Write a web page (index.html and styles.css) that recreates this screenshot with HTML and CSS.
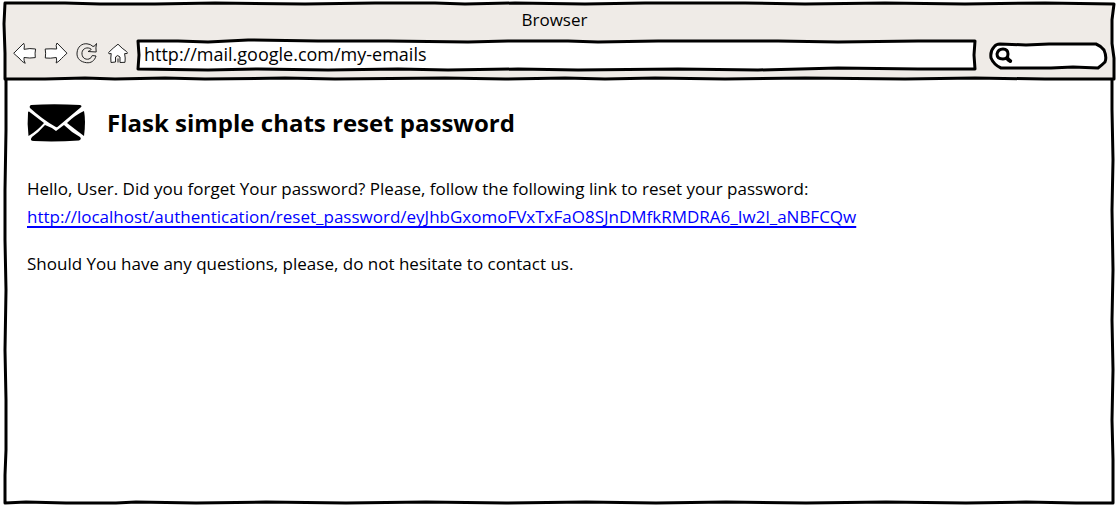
FILE: index.html
```html
<!DOCTYPE html>
<html lang="en">
<head>
<meta charset="utf-8">
<title>Browser</title>
<link rel="stylesheet" href="styles.css">
</head>
<body>
<div class="window">
  <header class="chrome">
    <svg class="outline" viewBox="0 0 1109 77" preserveAspectRatio="none" aria-hidden="true">
      <path class="chrome-fill" d="M0 -1L60 -1L95 0L150 0L210 -1L300 0L370 -1L430 -1L460 0L510 -1L580 0L640 -1L740 -1L800 0L880 -1L960 0L1040 -1L1109 0L1107 16L1107 40L1109 55L1109 76L1040 76L970 75L900 76L800 75L720 76L650 75L600 76L560 75L500 76L440 75L330 76L280 75L200 76L160 75L110 76L80 75L40 76L0 76L0 50L-1 20Z"/>
    </svg>
    <div class="title">Browser</div>
    <div class="toolbar">
      <nav class="nav" aria-label="Navigation">
        <button class="tool" type="button" aria-label="Back"><svg viewBox="0 0 24 24"><path d="M.7 12.3L10.7 2.3Q12 4 11 8.3Q17 7 22.6 8Q21.7 12 22.3 16.6Q17 17.500 11 16.500Q10.500 19 12.200 22.300Q9 21 6 17Q3 14.500 .7 12.300Z"/></svg></button>
        <button class="tool" type="button" aria-label="Forward"><svg viewBox="0 0 24 24"><path d="M23 12.200L13 2Q11.500 4 12.700 8Q7 7.600 1.200 8Q2 12 1.300 17Q6 17.600 12.300 16.500Q13 19 12.200 22Q15 20.500 17.500 17.500Q19 16 23 12.200Z"/></svg></button>
        <button class="tool" type="button" aria-label="Reload"><svg viewBox="0 0 24 24"><path d="M18 5.500Q20 5.500 21.500 2.500Q20.500 7 21.200 11L13 10.500Q15.500 10 16.200 8.200C12.500 5.400 7.500 7.500 7 11.500C6.500 16.500 10 19 14 18Q16.500 17 17.300 14.500L21 15C19.500 20 16 22.200 11.500 21.700C5.500 21 1.600 17.500 2 12C2.500 5.500 7 2.300 12 2.800Q15.500 3 18 5.500Z"/></svg></button>
        <button class="tool" type="button" aria-label="Home"><svg viewBox="0 0 24 24"><path d="M12 3.200Q7 7 2.600 11.500L3 12.800L5.200 12.500Q4.500 17 5 21.500L9.500 21V16Q11.500 13 14 16V21.500L19 21.300Q19.600 17 18.600 12.600L21.200 12.500Q21.700 11.500 20.500 10.500Q16 7.500 12 3.200Z"/><path d="M12 21.500V17.500"/></svg></button>
      </nav>
      <label class="field address">
        <svg class="outline" viewBox="0 0 837 28" preserveAspectRatio="none" aria-hidden="true"><path d="M0 0L40 0L70 1L110 -1L180 0L250 0L330 1L370 0L430 0L460 1L520 0L640 0L700 1L780 0L837 0L836 14L837 28L780 28L700 27L620 29L540 28L440 29L380 28L310 29L260 28L190 29L120 28L70 29L0 28L1 14Z"/></svg>
        <input class="input" type="text" aria-label="Address" value="http://mail.google.com/my-emails">
      </label>
      <label class="field search">
        <svg class="outline" viewBox="0 0 115 24" preserveAspectRatio="none" aria-hidden="true"><path d="M9 0L35 1L58 0L105 0Q110 2 113 6Q116 13 114 18Q111 21 107 24L82 23L60 24H10Q3 21 0 14Q-1 7 3 3Q5 0 9 0Z"/></svg>
        <svg class="lens" viewBox="0 0 18 18" aria-hidden="true"><path d="M8 2Q13 2 13 7Q13 12 8 12Q2 12 2 7Q3 2 8 2Z"/><path class="handle" d="M12.200 11Q13 13 15.200 14"/></svg>
        <input class="input" type="search" aria-label="Search">
      </label>
    </div>
  </header>
  <main class="content">
    <svg class="outline" viewBox="0 0 1107 423" preserveAspectRatio="none" aria-hidden="true"><path d="M0 0L0 50L-1 110L-1 160L0 210L-1 270L0 320L0 370L-1 395L-1 423L20 422L60 423L110 423L130 422L190 423L260 422L340 423L420 422L500 423L580 422L650 423L720 422L800 423L880 422L960 423L1020 422L1070 423L1107 423L1107 380L1106 340L1107 290L1106 240L1107 190L1106 130L1107 80L1106 30L1106 0"/></svg>
    <div class="heading">
      <svg class="envelope" viewBox="0 0 60 38" aria-hidden="true"><path d="M4 1Q26-.5 53 1Q56 2 53 4L31 22.500Q30 24 28 22.500Q15 15 3 4Q2 2 4 1Z"/><path d="M2 7.500L17 19Q10 27 1.500 32Q0 20 1 9Q1 7 2 7.500Z"/><path d="M57 7Q59 17 57 32Q49 26 40 19Q48 11 57 7Z"/><path d="M18 21Q24 23 29 27L37 21Q44 28 53 33Q55 35 52 36.500Q28 38 7 37Q2 37 5 33Q12 28 18 21Z"/></svg>
      <h1 class="subject">Flask simple chats reset password</h1>
    </div>
    <p class="text">Hello, User. Did you forget Your password? Please, follow the following link to reset your password:<br>
    <a class="link" href="#reset">http://localhost/authentication/reset_password/eyJhbGxomoFVxTxFaO8SJnDMfkRMDRA6_Iw2l_aNBFCQw</a></p>
    <p class="text">Should You have any questions, please, do not hesitate to contact us.</p>
  </main>
</div>
</body>
</html>
```
FILE: styles.css
```css
* {
  box-sizing: border-box;
}

body {
  margin: 0;
  background: #fff;
  color: #000;
  font: 17px/28px "Open Sans", "Noto Sans", sans-serif;
}

.window {
  display: flex;
  flex-direction: column;
  min-height: 100vh;
  padding: 4px 4px 4px 5px;
}

.outline {
  position: absolute;
  inset: 0;
  width: 100%;
  height: 100%;
  overflow: visible;
  pointer-events: none;
  fill: #fff;
  stroke: #000;
  stroke-width: 3px;
  stroke-linejoin: round;
}

.outline path {
  vector-effect: non-scaling-stroke;
}

.chrome {
  position: relative;
  z-index: 1;
  padding: 0 8px 11px;
}

.outline .chrome-fill {
  fill: #efebe7;
}

.title {
  position: relative;
  margin-bottom: 6px;
  padding-right: 10px;
  line-height: 31px;
  text-align: center;
}

.toolbar {
  position: relative;
  display: flex;
  align-items: center;
  gap: 16px;
}

.nav {
  display: flex;
  gap: 7px;
  margin-right: -8px;
  padding-bottom: 4px;
}

.tool {
  width: 24px;
  height: 24px;
  padding: 0;
  border: 0;
  background: none;
}

.tool svg {
  display: block;
  fill: #fff;
  stroke: #222;
  stroke-width: 1px;
  stroke-linejoin: round;
}

.tool:nth-child(3) svg {
  fill: none;
}

.field {
  position: relative;
  display: flex;
  align-items: center;
}

.address {
  flex: 1;
  height: 28px;
}

.search {
  width: 115px;
  height: 24px;
  margin-top: 2px;
}

.input {
  position: relative;
  width: 100%;
  height: 24px;
  padding: 0 6px 3px;
  border: 0;
  outline: 0;
  background: none;
  color: inherit;
  font: inherit;
  font-size: 18px;
}

.lens {
  position: relative;
  flex: none;
  width: 18px;
  height: 18px;
  margin-left: 4px;
  fill: none;
  stroke: #000;
  stroke-width: 3px;
  stroke-linecap: round;
}

.handle {
  stroke-width: 4px;
}

.content {
  position: relative;
  flex: 1;
  margin: 0 1px;
  padding: 24px 21px;
}

.content > :not(.outline) {
  position: relative;
}

.heading {
  display: flex;
  align-items: center;
  gap: 20px;
  margin-bottom: 33px;
}

.envelope {
  width: 60px;
  height: 38px;
}

.subject {
  margin: 0;
  font-size: 24px;
  line-height: 38px;
}

.text {
  margin: 0 0 19px;
}

.link {
  color: #00f;
  text-decoration: underline 2px;
  text-underline-offset: 3px;
  text-decoration-skip-ink: none;
}
```
